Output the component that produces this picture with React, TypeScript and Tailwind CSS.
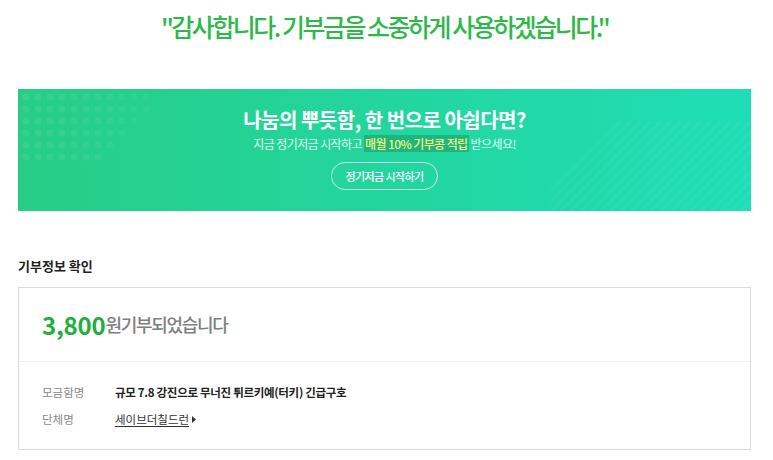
import React from "react";

const FONT = { fontFamily: '"Noto Sans CJK KR", "Noto Sans", sans-serif' };

// 배너 왼쪽 위 점 패턴 (장식)
function DotPattern() {
  const rows = [11, 11, 10, 9, 8, 7];
  return (
    <svg className="pointer-events-none absolute left-0 top-0" width="150" height="80" aria-hidden="true">
      {rows.map((cols, r) =>
        Array.from({ length: cols }).map((_, c) => (
          <circle
            key={`${r}-${c}`}
            cx={8 + c * 12}
            cy={8 + r * 12}
            r={3.4}
            fill="#ffffff"
            fillOpacity={0.08 - c * 0.004}
          />
        ))
      )}
    </svg>
  );
}

// 배너 오른쪽 아래 사선 무늬 (장식)
function StripePattern() {
  return (
    <svg className="pointer-events-none absolute bottom-0 right-0" width="200" height="90" aria-hidden="true">
      {Array.from({ length: 22 }).map((_, i) => (
        <line
          key={i}
          x1={i * 10 - 20}
          y1={90}
          x2={i * 10 + 70}
          y2={0}
          stroke="#ffffff"
          strokeOpacity={0.04}
          strokeWidth={3}
        />
      ))}
    </svg>
  );
}

export default function App() {
  return (
    <div className="min-h-[460px] w-[773px] bg-white pl-[18px] pr-[22px]" style={FONT}>
      <h1 className="pt-[9px] text-center text-[25px] font-medium leading-[34px] tracking-[-2.5px] text-[#2db84a]">
        "감사합니다. 기부금을 소중하게 사용하겠습니다."
      </h1>

      <div className="relative mt-[46px] flex h-[122px] flex-col items-center overflow-hidden bg-gradient-to-r from-[#27cd86] to-[#1fdeb6] pt-[17px]">
        <DotPattern />
        <StripePattern />
        <p className="relative text-[20px] font-bold leading-[28px] tracking-[-0.5px] text-white">
          나눔의 뿌듯함, 한 번으로 아쉽다면?
        </p>
        <p className="relative mt-[1px] text-[12px] leading-[18px] tracking-[-0.6px] text-white/85">
          지금 정기저금 시작하고{" "}
          <span className="bg-[#1a9e6a]/60 px-[1px] font-medium text-[#f3f57a]">매월 10% 기부콩 적립</span> 받으세요!
        </p>
        <button
          type="button"
          className="relative mt-[9px] h-[28px] rounded-full border border-white/70 px-[13px] text-[11px] font-medium tracking-[-0.6px] text-white"
        >
          정기저금 시작하기
        </button>
      </div>

      <h2 className="mt-[45px] text-[13px] font-bold leading-[20px] text-[#222]">기부정보 확인</h2>

      <div className="mt-[11px] border border-[#dcdcdc]">
        <div className="flex h-[74px] items-center border-b border-[#f0f0f0] px-[23px]">
          <span className="text-[24px] font-bold tracking-[-0.2px] text-[#1fae3f]">3,800</span>
          <span className="text-[18px] font-medium tracking-[-1.3px] text-[#808080]">원기부되었습니다</span>
        </div>
        <div className="flex flex-col gap-[8px] px-[23px] pb-[20px] pt-[21px] text-[11.5px] leading-[19px]">
          <div className="flex">
            <span className="w-[73px] text-[#888]">모금함명</span>
            <span className="font-bold tracking-[-0.3px] text-[#222]">규모 7.8 강진으로 무너진 튀르키예(터키) 긴급구호</span>
          </div>
          <div className="flex">
            <span className="w-[73px] text-[#888]">단체명</span>
            <span className="flex items-center gap-[3px] text-[#333]">
              <span className="underline underline-offset-2">세이브더칠드런</span>
              <svg width="4" height="7" viewBox="0 0 4 7" aria-hidden="true">
                <path d="M0 0 L4 3.5 L0 7 Z" fill="#333" />
              </svg>
            </span>
          </div>
        </div>
      </div>
    </div>
  );
}
